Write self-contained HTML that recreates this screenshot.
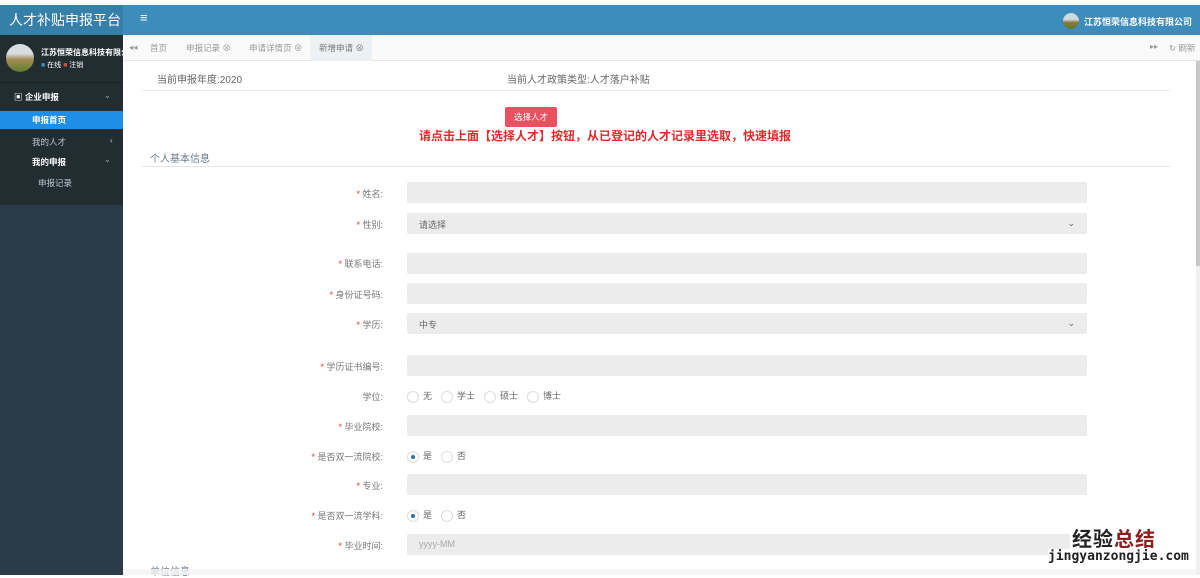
<!DOCTYPE html><html><head><meta charset="utf-8"><style>
*{margin:0;padding:0;box-sizing:border-box}
body{width:1200px;height:575px;overflow:hidden;background:#fff;font-family:"Liberation Sans","Noto Sans CJK SC",sans-serif;position:relative;color:#555}
.a{position:absolute}
.lbl{position:absolute;right:817px;font-size:9px;color:#777;white-space:nowrap}
.lbl b{color:#e33;font-weight:normal}
.inp{position:absolute;left:407px;width:680px;height:21px;background:#ececec;border-radius:2px;font-size:9px;color:#666;padding:5px 12px}
.r{display:inline-block;width:12px;height:12px;border:1px solid #ddd;border-radius:50%;vertical-align:middle;margin-right:4px;position:relative}
.rs::after{content:"";position:absolute;left:3px;top:3px;width:4px;height:4px;border-radius:50%;background:#2a6fb0}
.rad{position:absolute;left:407px;font-size:9px;color:#666}
.rad span{margin-right:9px}
</style></head><body>
<div class="a" style="left:0;top:5px;width:123px;height:30px;background:#367fa9;color:#fff;font-size:14px;line-height:30px;padding-left:9px">人才补贴申报平台</div>
<div class="a" style="left:123px;top:5px;width:1077px;height:30px;background:#3c8dbc"></div>
<div class="a" style="left:140px;top:10px;color:#fff;font-size:13px">≡</div>
<div class="a" style="left:1063px;top:13px;width:16px;height:16px;border-radius:50%;background:linear-gradient(#cfd9e0 40%,#8a7a3a 60%,#5d7a2a)"></div>
<div class="a" style="left:1084px;top:15px;color:#fff;font-size:9px;font-weight:bold">江苏恒荣信息科技有限公司</div>
<div class="a" style="left:0;top:35px;width:123px;height:170px;background:#222d32"></div>
<div class="a" style="left:0;top:205px;width:123px;height:370px;background:#2c3b4a"></div>
<div class="a" style="left:6px;top:44px;width:28px;height:28px;border-radius:50%;background:linear-gradient(#d8dde0 35%,#a58d55 55%,#5e7d2c)"></div>
<div class="a" style="left:41px;top:47px;color:#fff;font-size:8px;font-weight:bold;white-space:nowrap;width:82px;overflow:hidden">江苏恒荣信息科技有限公</div>
<div class="a" style="left:41px;top:60px;color:#fff;font-size:7px"><span style="color:#3c8dbc">■</span> 在线 <span style="color:#dd4b39">■</span> 注销</div>
<div class="a" style="left:0;top:82px;width:123px;height:1px;background:#1a2226"></div>
<div class="a" style="left:14px;top:91px;color:#fff;font-size:8.5px;font-weight:bold">▣ 企业申报</div>
<div class="a" style="left:104px;top:91px;color:#aaa;font-size:8px">⌄</div>
<div class="a" style="left:0;top:111px;width:123px;height:18px;background:#1e8fe8;color:#fff;font-size:8.5px;font-weight:bold;line-height:18px;padding-left:32px">申报首页</div>
<div class="a" style="left:32px;top:136px;color:#b8c7ce;font-size:8.5px">我的人才</div>
<div class="a" style="left:110px;top:136px;color:#b8c7ce;font-size:8px">‹</div>
<div class="a" style="left:32px;top:156px;color:#fff;font-size:8.5px;font-weight:bold">我的申报</div>
<div class="a" style="left:104px;top:155px;color:#aaa;font-size:8px">⌄</div>
<div class="a" style="left:38px;top:177px;color:#b8c7ce;font-size:8.5px">申报记录</div>
<div class="a" style="left:123px;top:35px;width:1077px;height:26px;background:#fafafa;border-bottom:1px solid #e5e5e5"></div>
<div class="a" style="left:310px;top:35px;width:62px;height:26px;background:#eef1f4"></div>
<div class="a" style="left:129px;top:42px;font-size:8.5px;color:#999">◂◂</div>
<div class="a" style="left:150px;top:42px;font-size:8.5px;color:#999">首页</div>
<div class="a" style="left:186px;top:42px;font-size:8.5px;color:#999">申报记录 ⊗</div>
<div class="a" style="left:249px;top:42px;font-size:8.5px;color:#999">申请详情页 ⊗</div>
<div class="a" style="left:319px;top:42px;font-size:8.5px;color:#777">新增申请 ⊗</div>
<div class="a" style="left:1150px;top:42px;font-size:8px;color:#999">▸▸</div>
<div class="a" style="left:1169px;top:42px;font-size:8.5px;color:#999">↻ 刷新</div>
<div class="a" style="left:1196px;top:61px;width:4px;height:514px;background:#f0f0f0"></div>
<div class="a" style="left:1196px;top:61px;width:4px;height:205px;background:#c8c8c8"></div>
<div class="a" style="left:157px;top:71px;font-size:10px;color:#666">当前申报年度:2020</div>
<div class="a" style="left:507px;top:71px;font-size:10px;color:#666">当前人才政策类型:人才落户补贴</div>
<div class="a" style="left:142px;top:90px;width:1028px;height:1px;background:#e8e8e8"></div>
<div class="a" style="left:505px;top:107px;width:52px;height:20px;background:#ea5160;border-radius:2px;color:#fff;font-size:8.5px;text-align:center;line-height:20px">选择人才</div>
<div class="a" style="left:419px;top:127px;font-size:12px;font-weight:bold;color:#e22a2a;white-space:nowrap">请点击上面【选择人才】按钮，从已登记的人才记录里选取，快速填报</div>
<div class="a" style="left:150px;top:150px;font-size:10px;color:#6a7b8b">个人基本信息</div>
<div class="a" style="left:142px;top:166px;width:1028px;height:1px;background:#e5e5e5"></div>

<div class="lbl" style="top:187px"><b>*</b> 姓名:</div><div class="inp" style="top:182px"></div>
<div class="lbl" style="top:218px"><b>*</b> 性别:</div><div class="inp" style="top:213px">请选择<span style="float:right">⌄</span></div>
<div class="lbl" style="top:257px"><b>*</b> 联系电话:</div><div class="inp" style="top:253px"></div>
<div class="lbl" style="top:288px"><b>*</b> 身份证号码:</div><div class="inp" style="top:283px"></div>
<div class="lbl" style="top:318px"><b>*</b> 学历:</div><div class="inp" style="top:313px">中专<span style="float:right">⌄</span></div>
<div class="lbl" style="top:360px"><b>*</b> 学历证书编号:</div><div class="inp" style="top:355px"></div>
<div class="lbl" style="top:390px">学位:</div><div class="rad" style="top:389px"><span><i class="r"></i>无</span><span><i class="r"></i>学士</span><span><i class="r"></i>硕士</span><span><i class="r"></i>博士</span></div>
<div class="lbl" style="top:420px"><b>*</b> 毕业院校:</div><div class="inp" style="top:415px"></div>
<div class="lbl" style="top:450px"><b>*</b> 是否双一流院校:</div><div class="rad" style="top:449px"><span><i class="r rs"></i>是</span><span><i class="r"></i>否</span></div>
<div class="lbl" style="top:479px"><b>*</b> 专业:</div><div class="inp" style="top:474px"></div>
<div class="lbl" style="top:509px"><b>*</b> 是否双一流学科:</div><div class="rad" style="top:508px"><span><i class="r rs"></i>是</span><span><i class="r"></i>否</span></div>
<div class="lbl" style="top:539px"><b>*</b> 毕业时间:</div><div class="inp" style="top:534px;color:#aaa">yyyy-MM</div>
<div class="a" style="left:150px;top:563px;font-size:10px;color:#6a7b8b">单位信息</div>
<div class="a" style="left:123px;top:569px;width:1073px;height:6px;background:#f4f4f4;opacity:.8"></div>
<div class="a" style="left:1070px;top:523px;font-size:20px;font-weight:bold;color:#222;letter-spacing:1px;background:#fff;padding:0 2px">经验<span style="color:#8b1f1f">总结</span></div>
<div class="a" style="left:1048px;top:549px;font-size:13px;font-weight:bold;color:#222;font-family:'DejaVu Sans Mono',monospace;background:#fff">jingyanzongjie.com</div>
</body></html>
